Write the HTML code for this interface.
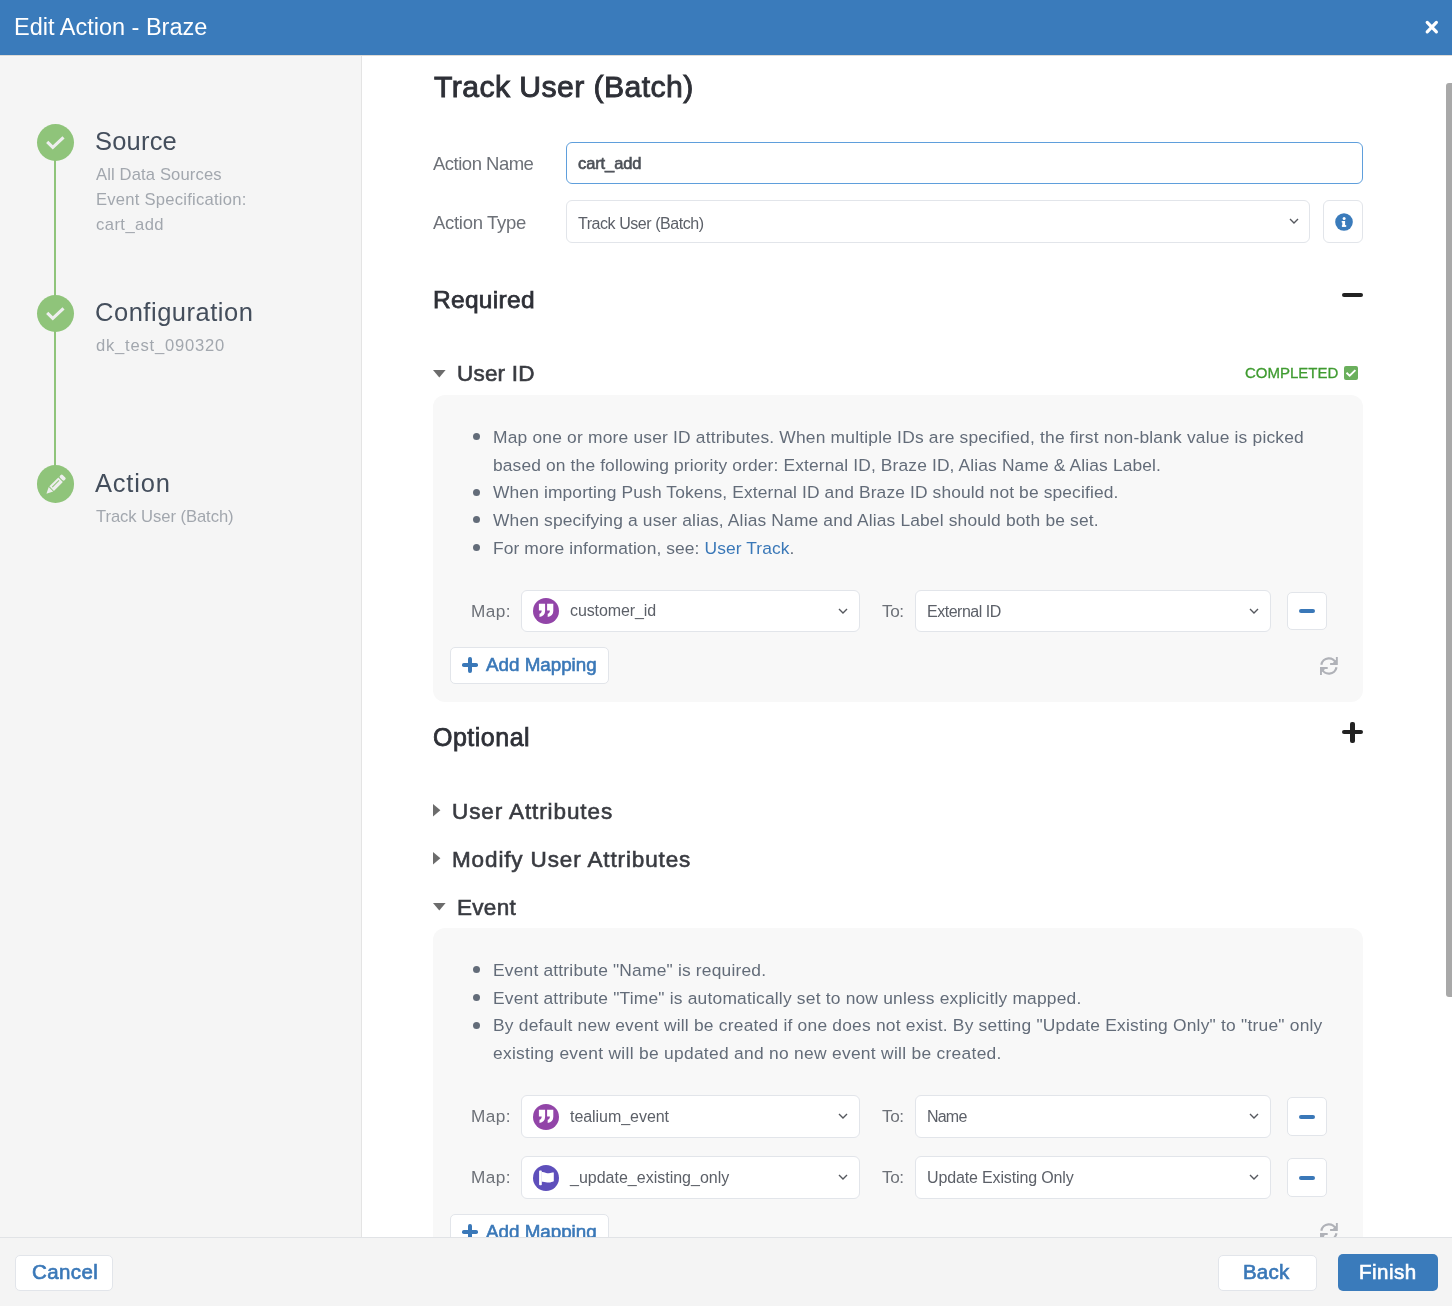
<!DOCTYPE html>
<html><head><meta charset="utf-8"><style>
html,body{margin:0;padding:0;width:1452px;height:1306px;overflow:hidden;background:#fff}
.t{position:absolute;white-space:nowrap;line-height:1;font-family:"Liberation Sans", sans-serif;will-change:transform}
.r{position:absolute;box-sizing:border-box}
svg.r{overflow:visible}
</style></head><body>
<div class="r" style="left:0px;top:0px;width:1452px;height:55px;background:#3a7bbb"></div>
<div class="r" style="left:0px;top:55px;width:361px;height:1182px;background:#f5f5f5"></div>
<div class="r" style="left:361px;top:55px;width:1px;height:1182px;background:#e4e4e4"></div>
<div class="r" style="left:362px;top:55px;width:1090px;height:1182px;background:#fff"></div>
<div class="r" style="left:0px;top:55px;width:1452px;height:1px;background:#dedbd6"></div>
<div class="r" style="left:0px;top:56px;width:361px;height:1px;background:#f7f7f7"></div>
<div class="r" style="left:0px;top:1237px;width:1452px;height:69px;background:#f4f4f4"></div>
<div class="r" style="left:0px;top:1237px;width:1452px;height:1px;background:#e1e3e6"></div>
<div class="t" style="left:14px;top:16px;font-size:23.5px;color:#fff;letter-spacing:0px;">Edit Action - Braze</div>
<svg class="r" style="left:1425px;top:21px" width="14" height="13" viewBox="0 0 14 13"><path d="M2.2 1.4 L11.4 10.9 M11.4 1.4 L2.2 10.9" stroke="#fff" stroke-width="3.2" stroke-linecap="round"/></svg>
<div class="r" style="left:54px;top:160px;width:2px;height:136px;background:#8fc47a"></div>
<div class="r" style="left:54px;top:331px;width:2px;height:135px;background:#8fc47a"></div>
<div class="r" style="left:37px;top:123.9px;width:37.2px;height:37.2px;background:#8fc47a;border-radius:50%"></div>
<div class="r" style="left:37px;top:294.9px;width:37.2px;height:37.2px;background:#8fc47a;border-radius:50%"></div>
<div class="r" style="left:37px;top:465.4px;width:37.2px;height:37.2px;background:#8fc47a;border-radius:50%"></div>
<svg class="r" style="left:37px;top:124.0px" width="37" height="37" viewBox="-18.5 -18.5 37 37"><path d="M-8.3 -0.6 L-2.7 4.9 L8 -5.2" fill="none" stroke="#eeeeee" stroke-width="3.1"/></svg>
<svg class="r" style="left:37px;top:295.0px" width="37" height="37" viewBox="-18.5 -18.5 37 37"><path d="M-8.3 -0.6 L-2.7 4.9 L8 -5.2" fill="none" stroke="#eeeeee" stroke-width="3.1"/></svg>
<svg class="r" style="left:37px;top:465.5px" width="37" height="37" viewBox="-18.5 -18.5 37 37"><g transform="translate(-0.3 0.6) rotate(45)"><rect x="-3.2" y="-12.4" width="6.4" height="3.8" rx="1.4" fill="#eee"/><rect x="-3.2" y="-7.6" width="6.4" height="12.6" fill="#eee"/><rect x="-1.2" y="-6" width="1.1" height="9.5" fill="#91c57a"/><path d="M-3.2 6 L3.2 6 L0 12.4 Z" fill="#eee"/></g></svg>
<div class="t" style="left:95px;top:129px;font-size:25.5px;color:#444e5c;letter-spacing:0.2px;">Source</div>
<div class="t" style="left:96px;top:167px;font-size:16.6px;color:#a2a7ae;letter-spacing:0.13px;">All Data Sources</div>
<div class="t" style="left:96px;top:192px;font-size:16.6px;color:#a2a7ae;letter-spacing:0.24px;">Event Specification:</div>
<div class="t" style="left:96px;top:217px;font-size:16.6px;color:#a2a7ae;letter-spacing:0.43px;">cart_add</div>
<div class="t" style="left:95px;top:300px;font-size:25.5px;color:#444e5c;letter-spacing:0.52px;">Configuration</div>
<div class="t" style="left:96px;top:338px;font-size:16.6px;color:#a2a7ae;letter-spacing:0.77px;">dk_test_090320</div>
<div class="t" style="left:95px;top:471px;font-size:25.5px;color:#444e5c;letter-spacing:0.8px;">Action</div>
<div class="t" style="left:96px;top:509px;font-size:16.6px;color:#a2a7ae;letter-spacing:-0.06px;">Track User (Batch)</div>
<div class="t" style="left:434px;top:72px;font-size:30.2px;color:#2e3037;letter-spacing:0.42px;-webkit-text-stroke:0.9px #2e3037;">Track User (Batch)</div>
<div class="t" style="left:433px;top:155px;font-size:18.5px;color:#6d7178;letter-spacing:-0.5px;">Action Name</div>
<div class="r" style="left:566px;top:142px;width:797px;height:42px;border:1px solid #5f9fdc;border-radius:6px;box-sizing:border-box;background:#fff"></div>
<div class="t" style="left:578px;top:155px;font-size:16.5px;color:#4d5158;letter-spacing:-0.1px;-webkit-text-stroke:0.6px #4d5158;">cart_add</div>
<div class="t" style="left:433px;top:214px;font-size:18.5px;color:#6d7178;letter-spacing:-0.3px;">Action Type</div>
<div class="r" style="left:566px;top:200px;width:744px;height:43px;border:1px solid #e2e5ea;border-radius:6px;box-sizing:border-box;background:#fff"></div>
<div class="t" style="left:578px;top:216px;font-size:16px;color:#5c6068;letter-spacing:-0.45px;">Track User (Batch)</div>
<svg class="r" style="left:1288.5px;top:217.5px" width="10" height="7" viewBox="0 0 10 7"><path d="M1 1 L5 5 L9 1" fill="none" stroke="#55585e" stroke-width="1.35"/></svg>
<div class="r" style="left:1323px;top:200px;width:40px;height:43px;border:1px solid #e2e5ea;border-radius:6px;box-sizing:border-box;background:#fff"></div>
<svg class="r" style="left:1335px;top:213px" width="18" height="18" viewBox="0 0 18 18"><circle cx="9" cy="9" r="8.8" fill="#3a7bbb"/><rect x="7.3" y="8" width="2.8" height="5.4" fill="#fff"/><rect x="6.9" y="12.1" width="4.3" height="1.8" fill="#fff"/><rect x="6.7" y="8" width="1.6" height="1.5" fill="#fff"/><circle cx="9.1" cy="5.6" r="1.5" fill="#fff"/></svg>
<div class="t" style="left:433px;top:288px;font-size:24.5px;color:#2e3037;letter-spacing:0.3px;-webkit-text-stroke:0.75px #2e3037;">Required</div>
<div class="r" style="left:1342px;top:293px;width:21px;height:4.4px;background:#222;border-radius:2px"></div>
<svg class="r" style="left:433px;top:370px" width="13" height="8" viewBox="0 0 13 8"><path d="M0 0 L12.6 0 L6.3 7.6 Z" fill="#6c6c6c"/></svg>
<div class="t" style="left:457px;top:363px;font-size:22.5px;color:#393b41;letter-spacing:0.2px;-webkit-text-stroke:0.6px #393b41;">User ID</div>
<div class="t" style="left:1245px;top:365.4px;font-size:15px;color:#3f9b30;letter-spacing:0px;-webkit-text-stroke:0.3px #3f9b30;">COMPLETED</div>
<svg class="r" style="left:1344px;top:366px" width="14" height="14" viewBox="0 0 14 14"><rect width="14" height="14" rx="2" fill="#6aaf5c"/><path d="M2.5 6.8 L5.65 9.7 L11.4 4.1" fill="none" stroke="#fff" stroke-width="1.9"/></svg>
<div class="r" style="left:433px;top:395px;width:930px;height:307px;background:#f8f8f8;border-radius:12px"></div>
<div class="r" style="left:473.2px;top:433.2px;width:7px;height:7px;background:#636c79;border-radius:50%"></div>
<div class="t" style="left:493px;top:429px;font-size:17.4px;color:#636c79;letter-spacing:0.195px;">Map one or more user ID attributes. When multiple IDs are specified, the first non-blank value is picked</div>
<div class="t" style="left:493px;top:457px;font-size:17.4px;color:#636c79;letter-spacing:0.135px;">based on the following priority order: External ID, Braze ID, Alias Name &amp; Alias Label.</div>
<div class="r" style="left:473.2px;top:488.59999999999997px;width:7px;height:7px;background:#636c79;border-radius:50%"></div>
<div class="t" style="left:493px;top:484px;font-size:17.4px;color:#636c79;letter-spacing:0.13px;">When importing Push Tokens, External ID and Braze ID should not be specified.</div>
<div class="r" style="left:473.2px;top:516.3000000000001px;width:7px;height:7px;background:#636c79;border-radius:50%"></div>
<div class="t" style="left:493px;top:512px;font-size:17.4px;color:#636c79;letter-spacing:0.16px;">When specifying a user alias, Alias Name and Alias Label should both be set.</div>
<div class="r" style="left:473.2px;top:544.0px;width:7px;height:7px;background:#636c79;border-radius:50%"></div>
<div class="t" style="left:493px;top:540px;font-size:17.4px;color:#636c79;letter-spacing:0.1px;">For more information, see: <span style="color:#3a78b8">User Track</span>.</div>
<div class="t" style="left:471px;top:603px;font-size:17.2px;color:#6d7178;letter-spacing:0.4px;">Map:</div>
<div class="r" style="left:521px;top:590px;width:339px;height:42px;border:1px solid #e2e5ea;border-radius:6px;box-sizing:border-box;background:#fff"></div>
<svg class="r" style="left:838px;top:607.5px" width="10" height="7" viewBox="0 0 10 7"><path d="M1 1 L5 5 L9 1" fill="none" stroke="#55585e" stroke-width="1.35"/></svg>
<svg class="r" style="left:533px;top:598.0px" width="26" height="26" viewBox="0 0 26 26"><circle cx="13" cy="13" r="13" fill="#9245a8"/><path d="M5.9 5.8 H12.1 V12.8 C12.1 16.4 10.1 18.4 6.5 18.9 V15.7 C7.7 15.4 8.6 14.6 8.7 12.4 H5.9 Z M14.1 5.8 H20.3 V12.8 C20.3 16.4 18.3 18.4 14.7 18.9 V15.7 C15.9 15.4 16.8 14.6 16.9 12.4 H14.1 Z" fill="#fff"/></svg>
<div class="t" style="left:570px;top:603px;font-size:16px;color:#5c6068;letter-spacing:-0.1px;">customer_id</div>
<div class="t" style="left:882px;top:603px;font-size:17.2px;color:#6d7178;letter-spacing:-0.4px;">To:</div>
<div class="r" style="left:915px;top:590px;width:356px;height:42px;border:1px solid #e2e5ea;border-radius:6px;box-sizing:border-box;background:#fff"></div>
<svg class="r" style="left:1249px;top:607.5px" width="10" height="7" viewBox="0 0 10 7"><path d="M1 1 L5 5 L9 1" fill="none" stroke="#55585e" stroke-width="1.35"/></svg>
<div class="t" style="left:927px;top:604px;font-size:16px;color:#5c6068;letter-spacing:-0.48px;">External ID</div>
<div class="r" style="left:1287px;top:592px;width:40px;height:38px;border:1px solid #e2e5ea;border-radius:5px;box-sizing:border-box;background:#fff"></div>
<div class="r" style="left:1299px;top:609.0px;width:16px;height:4px;background:#3a78b8;border-radius:2px"></div>
<div class="r" style="left:450px;top:647px;width:159px;height:37px;border:1px solid #e2e5ea;border-radius:5px;box-sizing:border-box;background:#fff"></div>
<div class="r" style="left:461.8px;top:663.2px;width:16.6px;height:3.6px;background:#3a78b8;border-radius:1.8px"></div>
<div class="r" style="left:468.2px;top:656.8px;width:3.8px;height:16px;background:#3a78b8;border-radius:1.9px"></div>
<div class="t" style="left:486px;top:655.5px;font-size:18.8px;color:#3a78b8;letter-spacing:0px;-webkit-text-stroke:0.6px #3a78b8;">Add Mapping</div>
<svg class="r" style="left:1316px;top:653px" width="26" height="26" viewBox="0 0 26 26"><g><path d="M5.3 11.76 A7.7 7.7 0 0 1 20.2 10.6" fill="none" stroke="#b0b2b8" stroke-width="2.2"/><path d="M19.9 4 H21.8 V12 H14.1 V10 H16.8 L19.9 6.8 Z" fill="#b0b2b8"/></g><g transform="rotate(180 12.9 13)"><path d="M5.3 11.76 A7.7 7.7 0 0 1 20.2 10.6" fill="none" stroke="#b0b2b8" stroke-width="2.2"/><path d="M19.9 4 H21.8 V12 H14.1 V10 H16.8 L19.9 6.8 Z" fill="#b0b2b8"/></g></svg>
<div class="t" style="left:433px;top:725px;font-size:25px;color:#2e3037;letter-spacing:0.5px;-webkit-text-stroke:0.75px #2e3037;">Optional</div>
<div class="r" style="left:1342px;top:730px;width:21px;height:4.2px;background:#222;border-radius:2px"></div>
<div class="r" style="left:1350.4px;top:721.5px;width:4.2px;height:21px;background:#222;border-radius:2px"></div>
<svg class="r" style="left:433px;top:804px" width="8" height="13" viewBox="0 0 8 13"><path d="M0 0 L7.4 6.2 L0 12.4 Z" fill="#6c6c6c"/></svg>
<div class="t" style="left:452px;top:800.5px;font-size:22.5px;color:#393b41;letter-spacing:0.9px;-webkit-text-stroke:0.6px #393b41;">User Attributes</div>
<svg class="r" style="left:433px;top:852px" width="8" height="13" viewBox="0 0 8 13"><path d="M0 0 L7.4 6.2 L0 12.4 Z" fill="#6c6c6c"/></svg>
<div class="t" style="left:452px;top:849px;font-size:22.5px;color:#393b41;letter-spacing:0.87px;-webkit-text-stroke:0.6px #393b41;">Modify User Attributes</div>
<svg class="r" style="left:433px;top:903px" width="13" height="8" viewBox="0 0 13 8"><path d="M0 0 L12.6 0 L6.3 7.6 Z" fill="#6c6c6c"/></svg>
<div class="t" style="left:457px;top:897px;font-size:22.5px;color:#393b41;letter-spacing:0.3px;-webkit-text-stroke:0.6px #393b41;">Event</div>
<div class="r" style="left:433px;top:928px;width:930px;height:372px;background:#f8f8f8;border-radius:12px"></div>
<div class="r" style="left:473.2px;top:966.2px;width:7px;height:7px;background:#636c79;border-radius:50%"></div>
<div class="t" style="left:493px;top:962px;font-size:17.4px;color:#636c79;letter-spacing:0.19px;">Event attribute "Name" is required.</div>
<div class="r" style="left:473.2px;top:993.9000000000001px;width:7px;height:7px;background:#636c79;border-radius:50%"></div>
<div class="t" style="left:493px;top:990px;font-size:17.4px;color:#636c79;letter-spacing:0.2px;">Event attribute "Time" is automatically set to now unless explicitly mapped.</div>
<div class="r" style="left:473.2px;top:1021.6000000000001px;width:7px;height:7px;background:#636c79;border-radius:50%"></div>
<div class="t" style="left:493px;top:1017px;font-size:17.4px;color:#636c79;letter-spacing:0.22px;">By default new event will be created if one does not exist. By setting "Update Existing Only" to "true" only</div>
<div class="t" style="left:493px;top:1045px;font-size:17.4px;color:#636c79;letter-spacing:0.29px;">existing event will be updated and no new event will be created.</div>
<div class="t" style="left:471px;top:1108px;font-size:17.2px;color:#6d7178;letter-spacing:0.4px;">Map:</div>
<div class="r" style="left:521px;top:1095px;width:339px;height:43px;border:1px solid #e2e5ea;border-radius:6px;box-sizing:border-box;background:#fff"></div>
<svg class="r" style="left:838px;top:1113.0px" width="10" height="7" viewBox="0 0 10 7"><path d="M1 1 L5 5 L9 1" fill="none" stroke="#55585e" stroke-width="1.35"/></svg>
<svg class="r" style="left:533px;top:1103.5px" width="26" height="26" viewBox="0 0 26 26"><circle cx="13" cy="13" r="13" fill="#9245a8"/><path d="M5.9 5.8 H12.1 V12.8 C12.1 16.4 10.1 18.4 6.5 18.9 V15.7 C7.7 15.4 8.6 14.6 8.7 12.4 H5.9 Z M14.1 5.8 H20.3 V12.8 C20.3 16.4 18.3 18.4 14.7 18.9 V15.7 C15.9 15.4 16.8 14.6 16.9 12.4 H14.1 Z" fill="#fff"/></svg>
<div class="t" style="left:570px;top:1109px;font-size:16px;color:#5c6068;letter-spacing:-0.05px;">tealium_event</div>
<div class="t" style="left:882px;top:1108px;font-size:17.2px;color:#6d7178;letter-spacing:-0.4px;">To:</div>
<div class="r" style="left:915px;top:1095px;width:356px;height:43px;border:1px solid #e2e5ea;border-radius:6px;box-sizing:border-box;background:#fff"></div>
<svg class="r" style="left:1249px;top:1113.0px" width="10" height="7" viewBox="0 0 10 7"><path d="M1 1 L5 5 L9 1" fill="none" stroke="#55585e" stroke-width="1.35"/></svg>
<div class="t" style="left:927px;top:1109px;font-size:16px;color:#5c6068;letter-spacing:-0.79px;">Name</div>
<div class="r" style="left:1287px;top:1097px;width:40px;height:39px;border:1px solid #e2e5ea;border-radius:5px;box-sizing:border-box;background:#fff"></div>
<div class="r" style="left:1299px;top:1114.5px;width:16px;height:4px;background:#3a78b8;border-radius:2px"></div>
<div class="t" style="left:471px;top:1169px;font-size:17.2px;color:#6d7178;letter-spacing:0.4px;">Map:</div>
<div class="r" style="left:521px;top:1156px;width:339px;height:43px;border:1px solid #e2e5ea;border-radius:6px;box-sizing:border-box;background:#fff"></div>
<svg class="r" style="left:838px;top:1174.0px" width="10" height="7" viewBox="0 0 10 7"><path d="M1 1 L5 5 L9 1" fill="none" stroke="#55585e" stroke-width="1.35"/></svg>
<svg class="r" style="left:533px;top:1164.5px" width="26" height="26" viewBox="0 0 26 26"><circle cx="13" cy="13" r="13" fill="#5e4fbb"/><rect x="6.1" y="5.6" width="2.7" height="14.7" rx="0.8" fill="#fff"/><path d="M8.6 7 C11 6.4 13.4 8.5 16 8.3 C18 8.1 19.4 7.4 20.8 7.6 L20.8 16.3 C19.2 16.8 17.8 17.6 15.8 17.6 C13.5 17.6 11 16.3 8.6 16.8 Z" fill="#fff"/></svg>
<div class="t" style="left:570px;top:1170px;font-size:16px;color:#5c6068;letter-spacing:0px;">_update_existing_only</div>
<div class="t" style="left:882px;top:1169px;font-size:17.2px;color:#6d7178;letter-spacing:-0.4px;">To:</div>
<div class="r" style="left:915px;top:1156px;width:356px;height:43px;border:1px solid #e2e5ea;border-radius:6px;box-sizing:border-box;background:#fff"></div>
<svg class="r" style="left:1249px;top:1174.0px" width="10" height="7" viewBox="0 0 10 7"><path d="M1 1 L5 5 L9 1" fill="none" stroke="#55585e" stroke-width="1.35"/></svg>
<div class="t" style="left:927px;top:1170px;font-size:16px;color:#5c6068;letter-spacing:-0.14px;">Update Existing Only</div>
<div class="r" style="left:1287px;top:1158px;width:40px;height:39px;border:1px solid #e2e5ea;border-radius:5px;box-sizing:border-box;background:#fff"></div>
<div class="r" style="left:1299px;top:1175.5px;width:16px;height:4px;background:#3a78b8;border-radius:2px"></div>
<div class="r" style="left:450px;top:1214px;width:159px;height:37px;border:1px solid #e2e5ea;border-radius:5px;box-sizing:border-box;background:#fff"></div>
<div class="r" style="left:461.8px;top:1230.2px;width:16.6px;height:3.6px;background:#3a78b8;border-radius:1.8px"></div>
<div class="r" style="left:468.2px;top:1223.8px;width:3.8px;height:16px;background:#3a78b8;border-radius:1.9px"></div>
<div class="t" style="left:486px;top:1222.5px;font-size:18.8px;color:#3a78b8;letter-spacing:0px;-webkit-text-stroke:0.6px #3a78b8;">Add Mapping</div>
<svg class="r" style="left:1316px;top:1219px" width="26" height="26" viewBox="0 0 26 26"><g><path d="M5.3 11.76 A7.7 7.7 0 0 1 20.2 10.6" fill="none" stroke="#b0b2b8" stroke-width="2.2"/><path d="M19.9 4 H21.8 V12 H14.1 V10 H16.8 L19.9 6.8 Z" fill="#b0b2b8"/></g><g transform="rotate(180 12.9 13)"><path d="M5.3 11.76 A7.7 7.7 0 0 1 20.2 10.6" fill="none" stroke="#b0b2b8" stroke-width="2.2"/><path d="M19.9 4 H21.8 V12 H14.1 V10 H16.8 L19.9 6.8 Z" fill="#b0b2b8"/></g></svg>
<div class="r" style="left:0px;top:1237px;width:1452px;height:69px;background:#f4f4f4"></div>
<div class="r" style="left:0px;top:1237px;width:1452px;height:1px;background:#e1e3e6"></div>
<div class="r" style="left:15px;top:1254.5px;width:98px;height:36px;border:1px solid #e2e5ea;border-radius:5px;box-sizing:border-box;background:#fff"></div>
<div class="t" style="left:32px;top:1262px;font-size:20.5px;color:#3a78b8;letter-spacing:0.4px;-webkit-text-stroke:0.65px #3a78b8;">Cancel</div>
<div class="r" style="left:1218px;top:1254.5px;width:98.5px;height:36px;border:1px solid #e2e5ea;border-radius:5px;box-sizing:border-box;background:#fff"></div>
<div class="t" style="left:1243px;top:1262px;font-size:20.5px;color:#3a78b8;letter-spacing:0.2px;-webkit-text-stroke:0.65px #3a78b8;">Back</div>
<div class="r" style="left:1338px;top:1254px;width:100px;height:37px;background:#3a7bbb;border-radius:5px"></div>
<div class="t" style="left:1359px;top:1262px;font-size:20.5px;color:#fff;letter-spacing:0.5px;-webkit-text-stroke:0.65px #fff;">Finish</div>
<div class="r" style="left:1446px;top:83px;width:6px;height:914px;background:#a9a9a9;border-radius:3px 0 0 3px"></div>
</body></html>
